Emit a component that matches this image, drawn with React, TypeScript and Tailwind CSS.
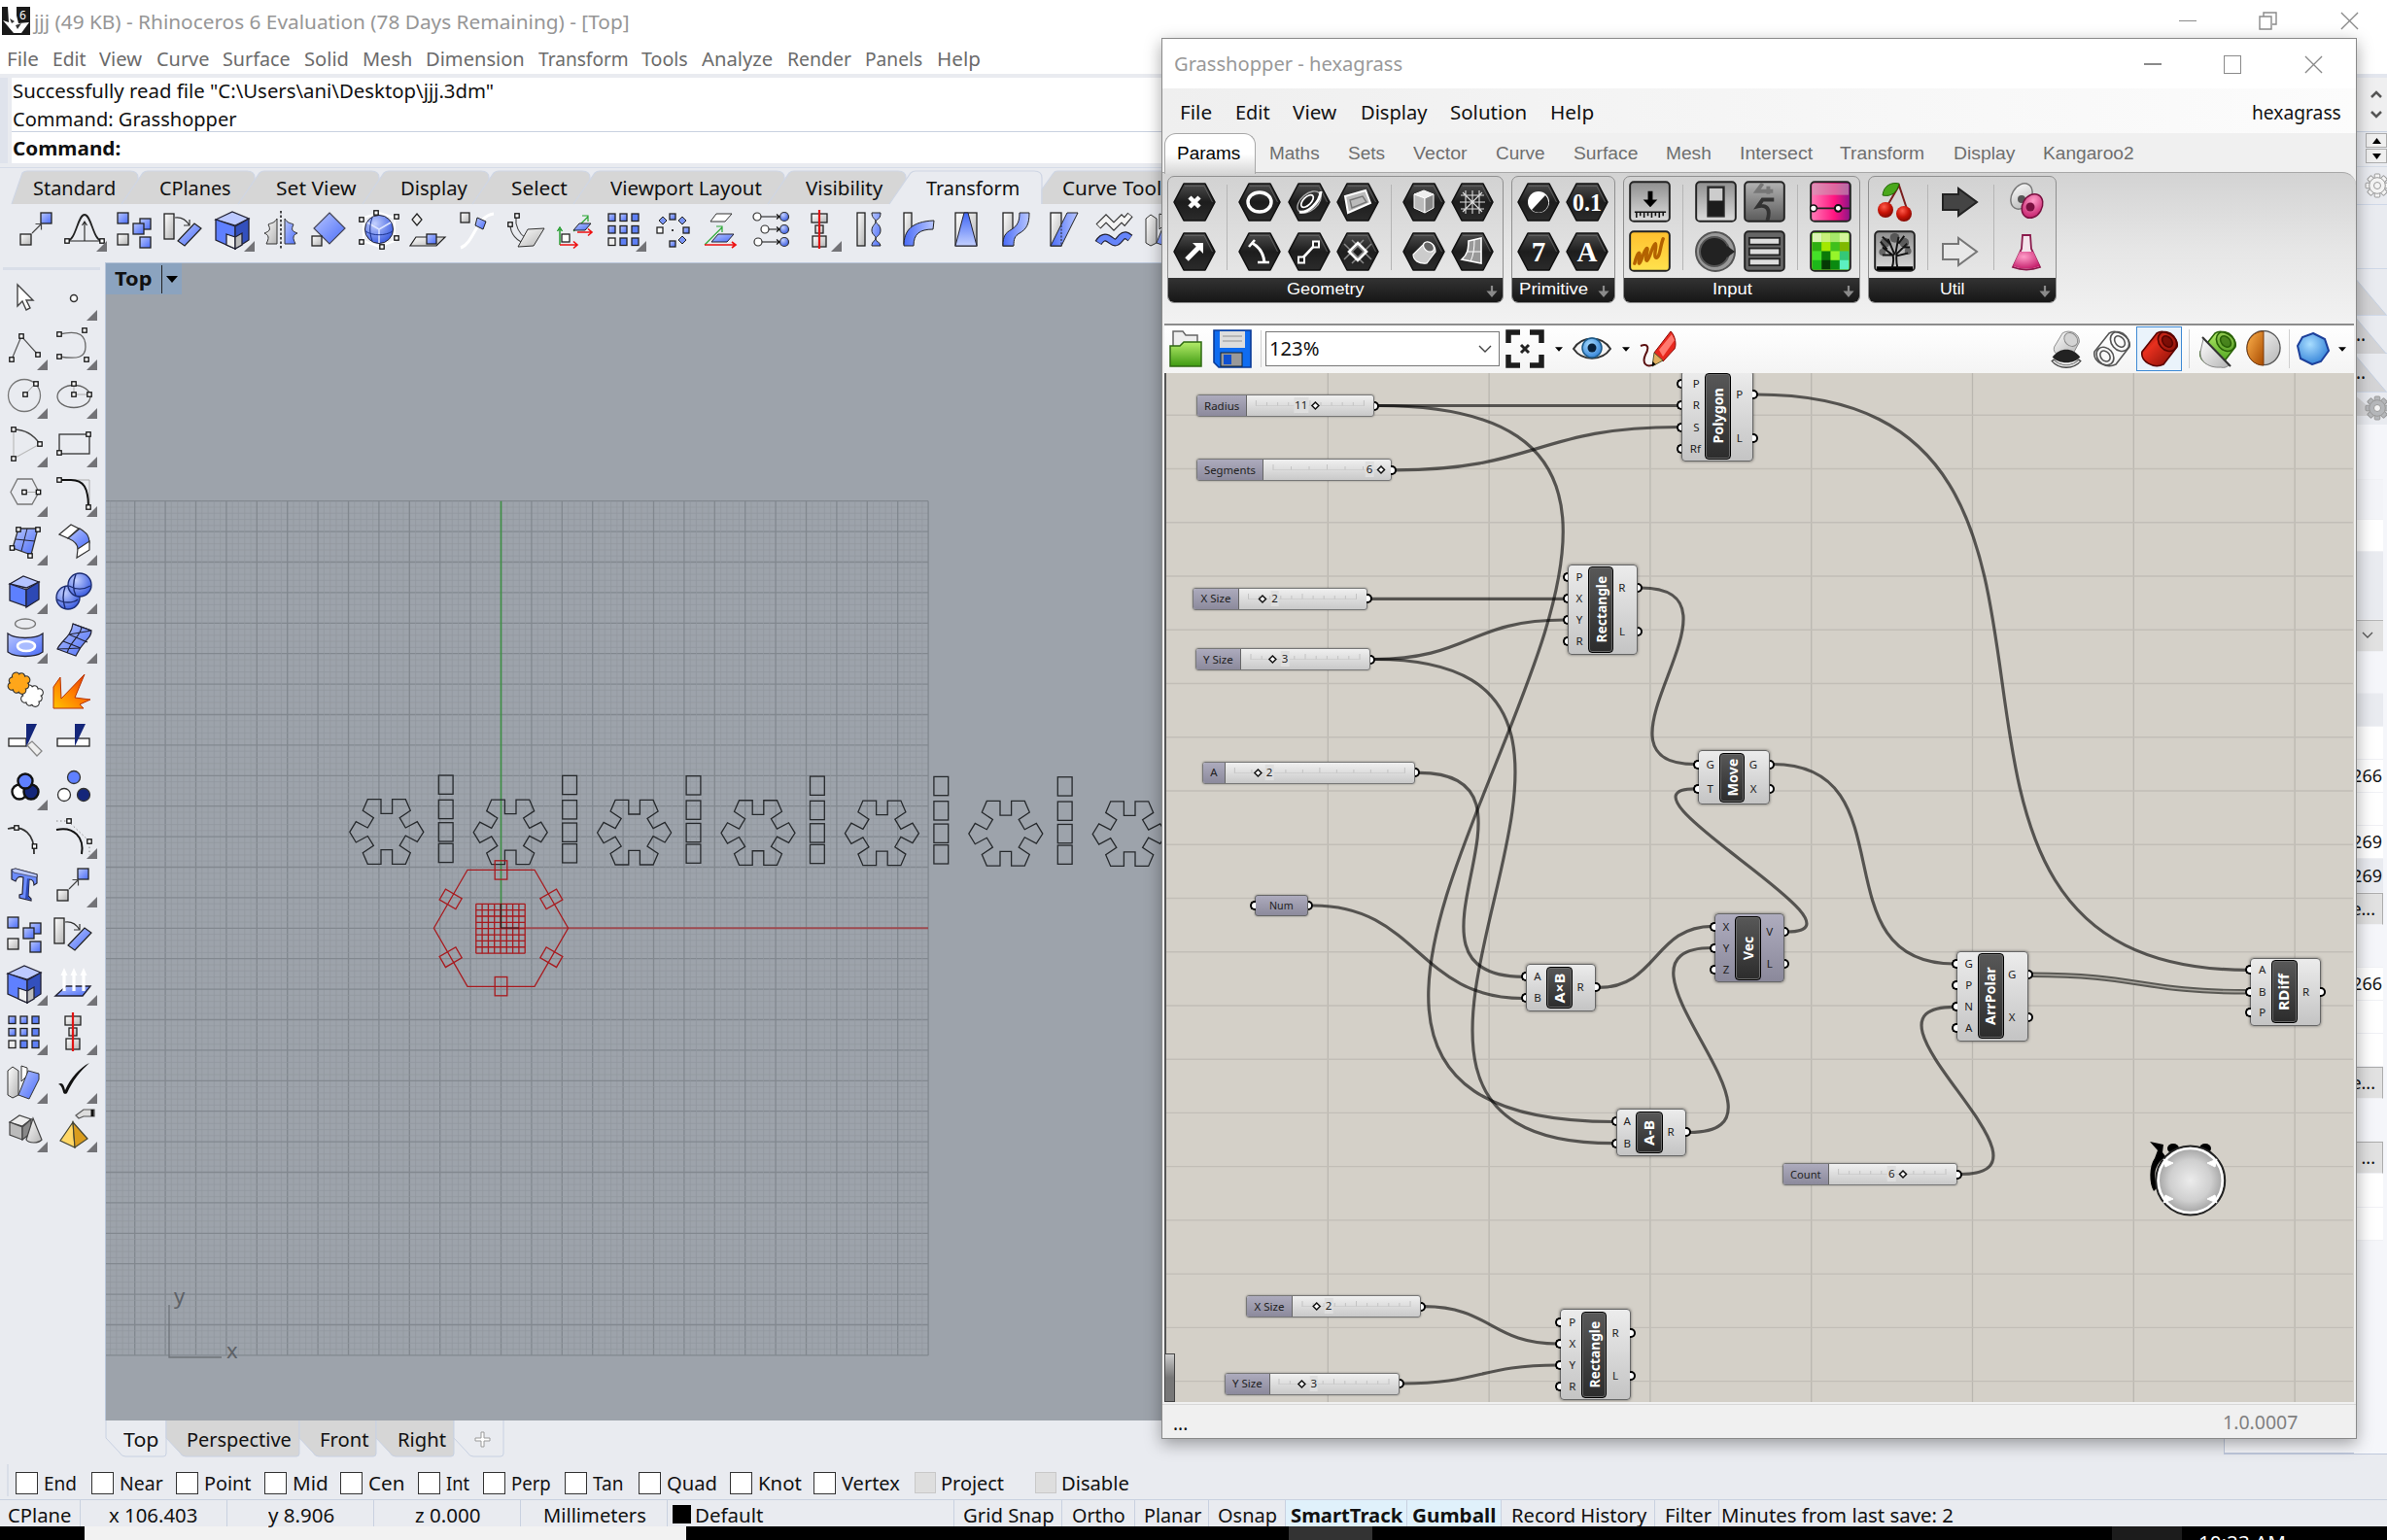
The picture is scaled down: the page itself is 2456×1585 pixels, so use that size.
import React, { useLayoutEffect, useRef, useState } from 'react';

/* ---------- text fitted to a given width ---------- */
function Label({ text, w, className = '' }: { text: string; w: number; className?: string }) {
  const ref = useRef<HTMLSpanElement>(null);
  const [k, setK] = useState(1);
  useLayoutEffect(() => {
    if (ref.current && ref.current.offsetWidth) setK(w / ref.current.offsetWidth);
  }, [text, w]);
  return (
    <span className={'inline-block shrink-0 whitespace-nowrap ' + className} style={{ width: w }}>
      <span ref={ref} className="inline-block origin-left" style={{ transform: `scaleX(${k})` }}>
        {text}
      </span>
    </span>
  );
}

/* ---------- drawing helpers ---------- */
const Defs = () => (
  <svg className="absolute h-0 w-0">
    <defs>
      <linearGradient id="bl" x1="0" y1="0" x2="1" y2="1"><stop offset="0" stopColor="#b9c7ff" /><stop offset="1" stopColor="#4a6cf7" /></linearGradient>
      <linearGradient id="bl2" x1="0" y1="0" x2="0" y2="1"><stop offset="0" stopColor="#3f66f5" /><stop offset="1" stopColor="#c3d0ff" /></linearGradient>
      <linearGradient id="bl3" x1="0" y1="0" x2="1" y2="0"><stop offset="0" stopColor="#4a6cf7" /><stop offset="1" stopColor="#b9c7ff" /></linearGradient>
      <radialGradient id="ball" cx=".35" cy=".3" r=".8"><stop offset="0" stopColor="#c3d0ff" /><stop offset="1" stopColor="#2f52dd" /></radialGradient>
      <linearGradient id="gy" x1="0" y1="0" x2="1" y2="1"><stop offset="0" stopColor="#ffffff" /><stop offset="1" stopColor="#b4b4b4" /></linearGradient>
      <linearGradient id="fire" x1="0" y1="1" x2="1" y2="0"><stop offset="0" stopColor="#ffc400" /><stop offset=".5" stopColor="#ff7a00" /><stop offset="1" stopColor="#e03000" /></linearGradient>
      <linearGradient id="hx" x1="0" y1="0" x2="0" y2="1"><stop offset="0" stopColor="#4c4c4c" /><stop offset=".5" stopColor="#1d1d1d" /><stop offset="1" stopColor="#2b2b2b" /></linearGradient>
      <linearGradient id="btn" x1="0" y1="0" x2="0" y2="1"><stop offset="0" stopColor="#8f8f8f" /><stop offset="1" stopColor="#dcdcdc" /></linearGradient>
      <linearGradient id="btnd" x1="0" y1="0" x2="0" y2="1"><stop offset="0" stopColor="#b4b4b4" /><stop offset="1" stopColor="#5a5a5a" /></linearGradient>
      <linearGradient id="yel" x1="0" y1="0" x2="0" y2="1"><stop offset="0" stopColor="#ffc02e" /><stop offset="1" stopColor="#ffe24d" /></linearGradient>
      <linearGradient id="pink" x1="0" y1="0" x2="1" y2="0"><stop offset="0" stopColor="#ff7db8" /><stop offset=".6" stopColor="#ff1480" /><stop offset="1" stopColor="#8a1488" /></linearGradient>
      <radialGradient id="red" cx=".4" cy=".3" r=".8"><stop offset="0" stopColor="#ff5a4a" /><stop offset=".5" stopColor="#c81408" /><stop offset="1" stopColor="#6e0500" /></radialGradient>
      <linearGradient id="redcan" x1="0" y1="0" x2="1" y2="1"><stop offset="0" stopColor="#7c0a04" /><stop offset=".35" stopColor="#e8301e" /><stop offset="1" stopColor="#7c0a04" /></linearGradient>
      <linearGradient id="grn" x1="0" y1="0" x2="0" y2="1"><stop offset="0" stopColor="#b4ec6a" /><stop offset="1" stopColor="#3f9a12" /></linearGradient>
      <radialGradient id="sky" cx=".4" cy=".35" r=".7"><stop offset="0" stopColor="#a8ddff" /><stop offset="1" stopColor="#2f7fd6" /></radialGradient>
      <linearGradient id="orange" x1="0" y1="0" x2="1" y2="1"><stop offset="0" stopColor="#ffb34d" /><stop offset="1" stopColor="#a84a00" /></linearGradient>
      <radialGradient id="mag" cx=".4" cy=".3" r=".8"><stop offset="0" stopColor="#ff9cc8" /><stop offset="1" stopColor="#c01464" /></radialGradient>
      <radialGradient id="disc" cx=".5" cy=".5" r=".5"><stop offset="0" stopColor="#ececec" /><stop offset=".6" stopColor="#cfcfcf" /><stop offset="1" stopColor="#9c9c9c" /></radialGradient>
    </defs>
  </svg>
);

const Sq = ({ x, y, w = 11, h = 11, f = 'url(#bl)' }: { x: number; y: number; w?: number; h?: number; f?: string }) => (
  <rect x={x} y={y} width={w} height={h} fill={f} stroke="#222" strokeWidth="1.3" />
);
const Pt = ({ x, y }: { x: number; y: number }) => <rect x={x - 2.2} y={y - 2.2} width="4.4" height="4.4" fill="#fff" stroke="#111" strokeWidth="1.3" />;
const W = 'url(#gy)';

/* jigsaw piece: a turned square with four knobs, outlined as one shape */
function Piece({ x, y, f }: { x: number; y: number; f: string }) {
  const body = (
    <>
      <rect x="-6" y="-6" width="12" height="12" />
      <circle cx="0" cy="-7.500" r="3.400" /><circle cx="8" cy="0" r="3.400" /><circle cx="0" cy="8" r="3.400" /><circle cx="-8" cy="0" r="3.400" />
      <circle cx="-5" cy="-5" r="3" /><circle cx="5" cy="5" r="3" /><circle cx="5" cy="-5" r="3" /><circle cx="-5" cy="5" r="3" />
    </>
  );
  return (
    <g transform={`translate(${x},${y}) rotate(-24)`}>
      <g fill="#333" stroke="#333" strokeWidth="2.400">{body}</g>
      <g fill={f}>{body}</g>
      <g fill="#eceef2" stroke="#333" strokeWidth="0" />
    </g>
  );
}

const I: Record<string, React.ReactNode> = {
  move: (<g><Sq x={9} y={29} f={W} /><Sq x={30} y={7} /><path d="M21 28l9-9M24.500 18.500h6v6" fill="none" stroke="#444" strokeWidth="1.2" /></g>),
  soft: (<g fill="none" stroke="#222"><path d="M7 36c9 0 11-27 18-27s9 27 18 27" strokeWidth="1.8" /><path d="M7 36h36M25 36V17M22.500 20l2.500-4 2.500 4" strokeWidth="1.100" /><Pt x={7} y={36} /><Pt x={43} y={36} /></g>),
  copy: (<g><Sq x={8} y={7} /><Sq x={31} y={13} /><Sq x={24} y={18} /><Sq x={8} y={29} f={W} /><Sq x={31} y={32} /></g>),
  rotate: (<g><Sq x={6} y={8} w={10} h={26} f={W} /><path d="M17 12c7-1 12 3 15 8M32 14v6h-6" fill="none" stroke="#333" strokeWidth="1.200" /><path d="M20 36l17-18 7 5-17 18z" fill="url(#bl)" stroke="#222" strokeWidth="1.200" /></g>),
  cube: (<g stroke="#223" strokeWidth="1.300"><path d="M8 14l17-8 17 7-14 7z" fill="#bcc9ff" /><path d="M8 14l20 7v23l-20-9z" fill="#5f80ff" /><path d="M28 21l14-8v22l-14 9z" fill="#3350bd" /><path d="M19 29l9 3v12l-9-4z" fill="#eee" /><path d="M28 32l7-4v12l-7 4z" fill="#bbb" /></g>),
  mirror: (<g stroke="#333"><path d="M21 13c-3 5-5 4-9 6 3 6 1 7-4 9 5 2 5 5 2 11h11z" fill={W} /><path d="M29 13c3 5 5 4 9 6-3 6-1 7 4 9-5 2-5 5-2 11H29z" fill="url(#bl)" /><path d="M25 5v40" stroke="#111" strokeWidth="1.500" strokeDasharray="2.500 2" /></g>),
  scale: (<g><path d="M25 7l16 16-16 16L9 23z" fill="url(#bl)" stroke="#445" strokeWidth="1.200" /><Sq x={7} y={31} w={10} h={10} f={W} /></g>),
  cage: (<g><path d="M25 7l16 5v24l-16 6-16-6V12z" fill="none" stroke="#fff" strokeWidth="2" /><circle cx="25" cy="24" r="14.500" fill="url(#ball)" stroke="#223" /><path d="M25 24v14M25 24l-12-7M25 24l12-7" stroke="#dde5ff" fill="none" strokeWidth="1.500" /><path d="M18 12c-3 8-3 16 0 24M11 26c8 5 20 5 28 0" stroke="#1d3590" fill="none" /><Pt x={22} y={7} /><Pt x={7} y={14} /><Pt x={43} y={11} /><Pt x={7} y={37} /><Pt x={43} y={33} /><Pt x={28} y={42} /></g>),
  proj: (<g stroke="#222" strokeWidth="1.200"><path d="M14 8l5 6-5 6-5-6z" fill="#eee" /><path d="M13 32h30l-9 9H7z" fill={W} /><Sq x={24} y={29} w={10} h={10} /></g>),
  orient: (<g><path d="M42 8C24 10 22 38 8 43" stroke="#fff" strokeWidth="3" fill="none" /><Sq x={8} y={7} w={9} h={10} f={W} /><path d="M25 12l9 4-3 8-8-4z" fill="url(#bl)" stroke="#222" /></g>),
  orient2: (<g fill="none" stroke="#444"><path d="M15 12v6c2 9 8 15 15 17M9 19c0 9 6 18 18 20" strokeWidth="1.100" /><path d="M27 24l17-1-11 18-16 1z" fill={W} stroke="#333" /><Pt x={16} y={10} /><Pt x={9} y={19} /></g>),
  remap: (<g fill="none"><path d="M10 40V24M7.500 26l2.500-4 2.500 4" stroke="#1b9a25" strokeWidth="1.400" /><path d="M10 40h17M24 36.500l4 3.500-4 3.500" stroke="#e11" strokeWidth="1.600" /><Sq x={12} y={29} w={8} h={8} f="#fff" /><path d="M24 26l15-15M33 10h6v6" stroke="#27a32f" strokeWidth="1.200" /><path d="M30 18h12l-6 7H24z" fill="url(#bl)" stroke="#222" /><path d="M28 27h14M39 23.500l4 3.500-4 3.500" stroke="#e11" strokeWidth="1.600" /></g>),
  array: (<g>{[0, 1, 2].map((r) => [0, 1, 2].map((c) => <Sq key={r + '-' + c} x={9 + c * 12} y={8 + r * 12.5} w={7} h={7.5} f={r === 2 && c === 0 ? '#eee' : r === 2 || c === 2 ? '#5f80f5' : 'url(#bl)'} />))}</g>),
  polar: (<g><Sq x={22} y={8} w={6} h={6} /><Sq x={9} y={22} w={6} h={6} f="#fff" /><Sq x={36} y={22} w={6} h={6} /><Sq x={22} y={36} w={6} h={6} /><path d="M15 11l4 4-4 4-4-4zM35 11l4 4-4 4-4-4zM35 31l4 4-4 4-4-4z" fill="#7a94f5" stroke="#222" /><circle cx="25" cy="25" r="1" /></g>),
  orient3: (<g fill="none"><path d="M20 8h16l-7 8H14z" fill="#fff" stroke="#333" /><path d="M8 40l18-18M20 21h6v6" stroke="#2aa835" strokeWidth="1.200" /><path d="M22 29h16l-7 8H15z" fill="url(#bl)" stroke="#223" /><path d="M8 40h31M36 37l4 3-4 3" stroke="#e11" strokeWidth="1.600" /></g>),
  setpt: (<g stroke="#333" strokeWidth="1.200">{[[11, 11], [19, 24], [12, 37]].map(([x, y]) => (<g key={y}><path d={`M${x} ${y}H34M31 ${y - 2.5}l3 2.500-3 2.500`} fill="none" stroke="#111" /><circle cx={x} cy={y} r="4" fill="#fff" /><circle cx="39" cy={y} r="4.500" fill="url(#ball)" /></g>))}</g>),
  align: (<g><Sq x={17} y={8} w={16} h={9} f={W} /><Sq x={21} y={20} w={8} h={8} f={W} /><Sq x={18} y={31} w={14} h={11} f={W} /><path d="M25 4v40" stroke="#e11414" strokeWidth="2.200" /></g>),
  twist: (<g stroke="#222"><Sq x={13} y={7} w={8} h={34} f={W} /><path d="M28 7h9c0 8-5 6-5 9 0 2 5 3 5 9s-5 6-5 9 5 3 5 7h-9c0-5 4-5 4-8s-4-3-4-8 4-6 4-9-4-3-4-9z" fill="url(#bl)" /></g>),
  bend: (<g stroke="#222"><Sq x={11} y={7} w={8} h={32} f={W} /><path d="M11 41c0-16 8-25 31-26l-1 9c-14 0-20 5-20 17z" fill="url(#bl3)" /></g>),
  taper: (<g><Sq x={14} y={7} w={22} h={34} f={W} /><path d="M23 7h4l9 34H14z" fill="url(#bl2)" stroke="#223" /></g>),
  flow: (<g stroke="#222"><Sq x={12} y={7} w={10} h={34} f={W} /><path d="M12 41c0-10 2-13 9-17 6-4 8-8 8-17h10c0 12-3 17-10 21-5 3-6 6-6 13z" fill="url(#bl3)" /></g>),
  shear: (<g stroke="#222"><Sq x={11} y={7} w={11} h={34} f={W} /><path d="M11 41L28 7h11L22 41z" fill="url(#bl3)" /><path d="M22 20v21" strokeDasharray="2 1.500" /></g>),
  smooth: (<g fill="none" strokeLinejoin="miter"><path d="M9 21l8-8 8 8 8-8 3 3 6-7" stroke="#333" strokeWidth="7" /><path d="M9.500 20.500l7.500-7.500 8 8 8-8 3 3 5.500-6.500" stroke="#f4f4f4" strokeWidth="4.600" /><path d="M9 38c5-8 9-6 14-2s7-1 10-4 5-2 9 1" stroke="#223" strokeWidth="8" /><path d="M9.500 37.500c5-7.500 8.500-5.500 13.500-1.500s7-1 10-4 5-2 8.500 1" stroke="#6685fa" strokeWidth="5.600" /></g>),
  cagefold: (<g stroke="#333"><path d="M8 13l5-4 6 4v25l-6 3-5-3z" fill={W} /><path d="M22 8l6 2v8l-6 6z" fill="#fff" /><path d="M19 38l10-25 11 3v6L30 42z" fill="url(#bl)" /></g>),

  arrow: (<path d="M18 10v22l5-5 4 9 4-2-4-8h7z" fill="#fff" stroke="#444" strokeWidth="1.400" transform="translate(0,1)" />),
  point: (<circle cx="26" cy="25" r="3.500" fill="#fff" stroke="#333" strokeWidth="1.500" />),
  pline: (<g><path d="M12 38l10-24 17 19" fill="none" stroke="#555" strokeWidth="1.200" /><Pt x={12} y={38} /><Pt x={22} y={14} /><Pt x={39} y={33} /></g>),
  curve: (<g><path d="M11 12c22-5 27 2 27 13s-8 13-27 10" fill="none" stroke="#666" strokeWidth="1.300" /><Pt x={11} y={12} /><Pt x={37} y={8} /><Pt x={11} y={35} /><Pt x={39} y={38} /></g>),
  circle: (<g><circle cx="25" cy="24" r="16.500" fill="none" stroke="#777" strokeWidth="1.300" /><path d="M26 23l10-11" stroke="#999" /><Pt x={26} y={23} /><Pt x={37} y={12} /></g>),
  ellipse: (<g><ellipse cx="26" cy="25" rx="17" ry="11.500" fill="none" stroke="#666" strokeWidth="1.300" /><path d="M26 13v10h17" fill="none" stroke="#aaa" /><Pt x={26} y={12} /><Pt x={26} y={23} /><Pt x={42} y={23} /></g>),
  arc: (<g><path d="M14 9v30l27-15" fill="none" stroke="#bbb" strokeWidth="1.200" /><path d="M14 9c12 0 21 6 27 15" fill="none" stroke="#444" strokeWidth="1.300" /><Pt x={14} y={9} /><Pt x={41} y={24} /><Pt x={14} y={39} /></g>),
  rect: (<g><rect x="11" y="14" width="31" height="20" fill="none" stroke="#333" strokeWidth="1.300" /><Pt x={11} y={33} /><Pt x={41} y={14} /></g>),
  hex: (<g><path d="M18 10h15l7 13.500-7 12.500H18l-7-12.500z" fill="none" stroke="#777" strokeWidth="1.300" /><path d="M25 23.500h14" stroke="#aaa" /><Pt x={25} y={23.5} /><Pt x={39.5} y={23.5} /></g>),
  fillet: (<g><path d="M11 11h31v28" fill="none" stroke="#aaa" /><path d="M11 11h12c13 0 18 8 18 28" fill="none" stroke="#111" strokeWidth="2" /><Pt x={11} y={11} /><Pt x={41} y={39} /></g>),
  surf: (<g><path d="M19 10h20l-7 27-19-7z" fill="url(#bl)" stroke="#333" strokeWidth="1.300" /><path d="M28 10l-6 23M16 21l20 2" stroke="#223" fill="none" /><Pt x={19} y={11} /><Pt x={39} y={11} /><Pt x={12.5} y={30} /><Pt x={31} y={38} /></g>),
  filsurf: (<g stroke="#333" strokeWidth="1.200"><path d="M11 16l12-10 8 4-11 10z" fill="#fff" /><path d="M20 20l12-10c8 5 10 8 10 15l-12 6c0-5-3-8-10-11z" fill="url(#bl)" /><path d="M30 31l12-8v9l-13 8z" fill="#fff" /></g>),
  box: (<g stroke="#223" strokeWidth="1.300"><path d="M10 17l14-8 16 6-13 6z" fill="#b4c4ff" /><path d="M10 17l17 6v17l-17-6z" fill="#5d80ff" /><path d="M27 23l13-8v18l-13 8z" fill="#2d49b5" /></g>),
  union: (<g stroke="#1c2c70" strokeWidth="1.400"><circle cx="20" cy="31" r="12" fill="url(#ball)" /><circle cx="32" cy="18" r="12" fill="url(#ball)" /><path d="M17 20c-3 8-2 16 0 22M9 33c6 4 16 4 21 0M28 7c-3 8-3 16 0 22M21 19c7 4 15 4 22 0" fill="none" /></g>),
  projc: (<g><ellipse cx="26" cy="8" rx="10.500" ry="5" fill="none" stroke="#777" strokeWidth="1.300" /><path d="M8 18c8 6 28 6 36 0v19c-8 6-28 6-36 0z" fill="url(#bl)" stroke="#223" strokeWidth="1.300" /><ellipse cx="27" cy="31" rx="9" ry="5" fill="#a9bcff" stroke="#fff" strokeWidth="2.500" /></g>),
  mesh: (<g stroke="#223" strokeWidth="1.200" fill="url(#bl)"><path d="M25 8l19 7c0 9-8 9-16 26L9 34c4-9 14-12 16-26z" /><path d="M34 11c-1 10-11 14-15 27M21 19l19 8M15 26l18 7M25 8l19 7M9 34l24-1M21 19l23-4" fill="none" /></g>),
  puzzle: (<g><Piece x={33} y={31} f="#fff" /><Piece x={19.5} y={18} f="#ffa61a" /></g>),
  explode: (<path d="M5 44V22l7-10 1 22L37 9 27 33l16 2-11 5 4 4z" fill="url(#fire)" stroke="#b83200" strokeWidth="1" />),
  trim: (<g><Sq x={9} y={25} w={18} h={8} f="#fff" /><path d="M27 34V10h11z" fill="#14267a" /><path d="M28 32l5-4 10 10-5 5z" fill="#eee" stroke="#888" strokeWidth="1.300" /></g>),
  split: (<g><Sq x={9} y={25} w={33} h={8} f="#fff" /><path d="M27 33V10h11z" fill="#14267a" /></g>),
  group: (<g strokeWidth="2.400" stroke="#111"><circle cx="20" cy="30" r="7.500" fill="#fff" /><circle cx="32" cy="30" r="7.500" fill="#14267a" /><circle cx="26" cy="19" r="7.500" fill="#5f80ff" /></g>),
  ungroup: (<g strokeWidth="1.300" stroke="#333"><circle cx="16" cy="33" r="6.500" fill="#fff" /><circle cx="36" cy="33" r="6.500" fill="#14267a" /><circle cx="26" cy="15" r="6.500" fill="#5f80ff" /></g>),
  ptson: (<g><path d="M8 17c16-4 28 5 27 26" fill="none" stroke="#333" strokeWidth="1.800" /><Pt x={17} y={16} /><Pt x={35.5} y={35} /></g>),
  ptson2: (<g><path d="M8 18c18-4 29 8 26 25" fill="none" stroke="#111" strokeWidth="2" /><path d="M8 9h12l22 21v14" fill="none" stroke="#888" strokeDasharray="1.500 2.500" /><Pt x={21} y={9} /><Pt x={42} y={30} /></g>),
  text: (<g stroke="#223" strokeWidth="1.200"><path d="M12 9l4-1 22 6v9l-3 2c0-4-2-6-5-6l-1 17 3 3v2l-12-3v-3l3-1 1-17c-5-2-7 1-8 4l-4-2z" fill="#6c8cff" /><path d="M12 9l4-1 22 6v3l-24-5z" fill="#bccaff" strokeWidth=".6" /><path d="M28 18l2 1-1 18 3 3-6-1z" fill="#2d49b5" stroke="none" /></g>),
  extrude: (<g><path d="M18 28h25l-8 10H7z" fill="url(#bl)" stroke="#223" strokeWidth="1.400" /><path d="M16 33V14M26 33V14M36 33V14" stroke="#fff" strokeWidth="3.200" /><path d="M12.500 17L16 9l3.500 8zM22.500 17L26 9l3.500 8zM32.500 17L36 9l3.500 8z" fill="#fff" /></g>),
  check: (<path d="M10 28c4-3 6 1 7 6 6-13 15-23 25-28-10 9-17 18-23 31-2 2-4 0-4-1-1-5-3-8-5-8z" fill="#111" />),
  solids: (<g stroke="#444" strokeWidth="1.200"><path d="M10 17l10-7 12 4-9 7z" fill="#eee" /><path d="M10 17l13 5v13l-13-5z" fill="#bbb" /><path d="M23 22l9-8v14l-9 7z" fill="#888" /><path d="M34 13l9 22c-4 4-13 4-16 0z" fill={W} /></g>),
  pyramid: (<g stroke="#443" strokeWidth="1.200"><path d="M25 17L12 36l15 7z" fill="#ffd766" /><path d="M25 17l15 17-13 9z" fill="#d99c1e" /><path d="M28 10l8-6h11v7H36l-5 2z" fill="#ddd" stroke="#555" /><path d="M45 4v7" stroke="#111" strokeWidth="3" /></g>),
};

function Icon({ n }: { n: string }) {
  return <svg viewBox="0 0 50 50" className="block h-[50px] w-[50px]">{I[n]}</svg>;
}
const Corner = ({ className }: { className: string }) => (
  <svg viewBox="0 0 11 11" className={'absolute h-[11px] w-[11px] ' + className}><path d="M11 0v11H0z" fill="#737377" /></svg>
);

/* ---------- Rhino top ---------- */
const menus: [string, number][] = [['File', 33], ['Edit', 35], ['View', 45], ['Curve', 55], ['Surface', 70], ['Solid', 46], ['Mesh', 52], ['Dimension', 102], ['Transform', 93], ['Tools', 48], ['Analyze', 74], ['Render', 67], ['Panels', 60], ['Help', 45]];
const tabs: [string, number, number, number][] = [['Standard', 130, 22, 85], ['CPlanes', 120, 22, 74], ['Set View', 128, 22, 83], ['Display', 113, 22, 69], ['Select', 104, 23, 58], ['Viewport Layout', 200, 21, 156], ['Visibility', 125, 22, 79], ['Transform', 140, 21, 96], ['Curve Tools', 140, 21, 112]];
const tools = ['move', 'soft', 'copy', 'rotate', 'cube', 'mirror', 'scale', 'cage', 'proj', 'orient', 'orient2', 'remap', 'array', 'polar', 'orient3', 'setpt', 'align', 'twist', 'bend', 'taper', 'flow', 'shear', 'smooth', 'cagefold'];
const toolCorner = [1, 4, 12, 16];
const side: [string, boolean][] = [
  ['arrow', false], ['point', true], ['pline', true], ['curve', true], ['circle', true], ['ellipse', true], ['arc', true], ['rect', true], ['hex', true], ['fillet', true],
  ['surf', true], ['filsurf', true], ['box', true], ['union', true], ['projc', true], ['mesh', true], ['puzzle', false], ['explode', false], ['trim', false], ['split', false],
  ['group', true], ['ungroup', false], ['ptson', false], ['ptson2', true], ['text', false], ['move', true], ['copy', false], ['rotate', false], ['cube', true], ['extrude', true],
  ['array', true], ['align', true], ['cagefold', true], ['check', true], ['solids', true], ['pyramid', true],
];
const shifted = ['move', 'copy', 'rotate', 'cube', 'array', 'align', 'cagefold'];

const WinX = () => <svg viewBox="0 0 20 20" className="h-[19px] w-[19px]"><path d="M1 1l18 18M19 1L1 19" stroke="#8a8a8a" strokeWidth="1.400" /></svg>;

function RhinoHeader() {
  return (
    <>
      <div className="flex h-[42px] shrink-0 items-center bg-white pl-[2px] pt-[1px]">
        <svg viewBox="0 0 29 29" className="h-[29px] w-[29px]">
          <rect width="29" height="29" fill="#1a1a1a" />
          <path d="M6 0l9 0 0 9 2 8 11-1-8 11h-8L1 14l6 2z" fill="#fff" /><path d="M8 12l5 3-3 2zM14 19l6-2-4 6z" fill="#333" />
          <text x="18" y="13" fontSize="12" fill="#fff" fontFamily="Noto Sans, sans-serif">6</text>
        </svg>
        <Label text="jjj (49 KB) - Rhinoceros 6 Evaluation (78 Days Remaining) - [Top]" w={612} className="ml-[4px] mt-[2px] text-[#969696]" />
        <div className="ml-auto flex items-center pr-[29px]">
          <div className="mr-[64px] h-[1.500px] w-[18px] bg-[#8a8a8a]" />
          <svg viewBox="0 0 19 19" className="mr-[65px] h-[19px] w-[19px]"><path d="M1 5h12v13H1zM5 5V1h13v12h-4" fill="none" stroke="#8a8a8a" strokeWidth="1.400" /></svg>
          <WinX />
        </div>
      </div>
      <div className="flex h-[34px] shrink-0 items-center gap-[14.100px] bg-white pl-[7px] pt-[4px] text-[#6b6b6b]">
        {menus.map(([t, w]) => <Label key={t} text={t} w={w - 0.5} />)}
      </div>
      <div className="flex h-[96px] shrink-0 border-y-[4px] border-[#e9ebf0]">
        <div className="h-full w-[12px] border-r-4 border-[#e9ebf0] bg-[#dfe3ec]" />
        <div className="flex flex-1 flex-col bg-white">
          <div className="flex h-[56px] flex-col border-b border-[#c9d1e0] pl-[1px]">
            <div className="flex h-[28px] items-center"><Label text={'Successfully read file "C:\\Users\\ani\\Desktop\\jjj.3dm"'} w={495} /></div>
            <div className="flex h-[28px] items-center pt-[1px]"><Label text="Command: Grasshopper" w={230} /></div>
          </div>
          <div className="flex flex-1 items-center pl-[1px] pt-[1px]"><Label text="Command:" w={111} className="font-bold" /></div>
        </div>
      </div>
      <div className="flex h-[38px] shrink-0 items-end border-t border-[#d5dce8] pl-[12px]">
        {tabs.map(([t, w, pl, tw], i) => {
          const active = t === 'Transform';
          const d = i === 0 ? `M0 35L11 3Q13 1 16 1H${w - 8}Q${w} 1 ${w} 8V35` : i === 8 ? `M0 35V20L12 3Q13 1 16 1H${w}V35` : `M-17 35L5 3Q7 1 10 1H${w - 8}Q${w} 1 ${w} 8V35`;
          return (
            <div key={t} className="relative flex h-[35px] shrink-0 items-center pt-[3px]" style={{ width: w, paddingLeft: pl }}>
              <svg className="absolute inset-0 h-full w-full overflow-visible"><path d={d} fill={active ? '#e9ebf0' : '#d6d6d6'} stroke="#cfd6e4" strokeWidth="1.200" /></svg>
              <Label text={t} w={tw} className="relative" />
            </div>
          );
        })}
      </div>
      <div className="flex h-[60px] shrink-0 pl-[12px]">
        {tools.map((n, i) => (
          <div key={n} className="relative w-[50.400px] shrink-0 pt-[2px]">
            <Icon n={n} />
            {toolCorner.includes(i) && <Corner className="left-[37px] top-[38px]" />}
          </div>
        ))}
      </div>
    </>
  );
}

function SideBar() {
  return (
    <div className="h-[1192px] w-[109px] shrink-0 border-r border-[#b9c6da] pt-[5px]">
      <div className="mb-[4px] ml-[3px] h-[3px] w-[100px] bg-[#d9dee8]" />
      <div className="grid w-[101px] grid-cols-[50.400px_50.400px]">
        {side.map(([n, c], i) => (
          <div key={i} className="relative h-[50.350px]">
            <div className={shifted.includes(n) ? 'translate-y-[1px]' : ''}><Icon n={n} /></div>
            {c && <Corner className="bottom-[2px] right-[1px]" />}
          </div>
        ))}
      </div>
    </div>
  );
}

/* ---------- Rhino viewport ---------- */
const half: [number, number][] = [[-19.5, -33.3], [-5.8, -33.3], [-5.8, -18.7], [5.8, -18.7], [5.8, -33.3], [19.5, -33.3], [24.5, -21.7], [13.4, -14.3], [19.5, -4], [31.5, -10.3], [38, 0.3]];
const gearPts = [...half, ...[...half].slice(0, 10).reverse().map(([x, y]) => [x, -y] as [number, number]), [-24.5, 21.7], [-13.4, 14.3], [-19.5, 4.5], [-31.5, 11], [-38, 0.3], [-31.5, -10.3], [-19.5, -4], [-13.4, -14.3], [-24.5, -21.7]]
  .map((p) => p.join(',')).join(' ');

function Viewport() {
  const ox = 515.5, oy = 955.3, m = 6.28;
  const lines: React.ReactNode[] = [];
  for (let k = -70; k <= 70; k++) {
    const major = k % 5 === 0;
    const c = major ? '#82888f' : '#92989f';
    const sw = major ? 1.3 : 0.7;
    lines.push(<path key={'h' + k} d={`M109 ${oy + k * m}H${ox + 70 * m}`} stroke={c} strokeWidth={sw} />);
    if (ox + k * m > 109) lines.push(<path key={'v' + k} d={`M${ox + k * m} ${oy - 70 * m}V${oy + 70 * m}`} stroke={c} strokeWidth={sw} />);
  }
  return (
    <div className="relative h-[1192px] w-[1087px] shrink-0 overflow-hidden border-t border-[#b9c6da] bg-[#9da3ab]">
      <svg viewBox="109 271 1087 1191" className="block h-[1191px] w-[1087px]" fill="none">
        {lines}
        <path d={`M${ox} ${oy}V${oy - 439.5}`} stroke="#3f8f45" strokeWidth="1.600" />
        <path d={`M${ox} ${oy}H955`} stroke="#9e4a50" strokeWidth="2" />
        <g stroke="#26292c" strokeWidth="1.300">
          {[0, 1, 2, 3, 4, 5, 6].map((i) => <polygon key={i} points={gearPts} transform={`translate(${397.8 + i * 127.4},${856 + i * 0.35})`} />)}
          {[0, 1, 2, 3, 4, 5].map((i) => [798, 823.3, 846.7, 868.3].map((y) => <rect key={i + '-' + y} x={451.3 + i * 127.4} y={y + i * 0.35} width="14.800" height="19.300" />))}
        </g>
        <g stroke="#a81a1e" strokeWidth="1.300">
          <polygon points="446.4,955.3 481,895.3 550,895.3 584.6,955.3 550,1015.3 481,1015.3" />
          {[0, 60, 120, 180, 240, 300].map((a) => <rect key={a} x="509.200" y="885.800" width="12.600" height="19.300" transform={`rotate(${a} ${ox} ${oy})`} />)}
          {[0, 1, 2, 3, 4, 5, 6, 7, 8].map((i) => <path key={i} d={`M${489.8 + i * 6.3} 930.300v51M489.800 ${930.3 + i * 6.35}h50.400`} />)}
        </g>
        <path d={`M${ox} 930V955H534`} stroke="#2b1a1a" strokeWidth="1.200" />
        <path d="M174 1343v54h54" stroke="#6f747a" strokeWidth="1.300" />
        <g fill="#5d6166" fontSize="22" fontFamily="Noto Sans, sans-serif"><text x="179" y="1342">y</text><text x="233" y="1398">x</text></g>
      </svg>
      <div className="absolute left-0 top-0 flex h-[32px] w-[78px] items-center bg-[#8ba3bf] pl-[9px]">
        <Label text="Top" w={39} className="font-bold" />
        <div className="ml-[9px] h-[29px] w-px bg-[#222]" />
        <svg viewBox="0 0 12 7" className="ml-[4px] h-[7px] w-[12px]"><path d="M0 0h12L6 7z" /></svg>
      </div>
    </div>
  );
}

/* ---------- Rhino bottom ---------- */
const views: [string, number, number][] = [['Top', 62, 36], ['Perspective', 137, 108], ['Front', 79, 50], ['Right', 80, 50]];
const snaps: [string, number, number, boolean][] = [['End', 78, 34, true], ['Near', 87, 45, true], ['Point', 91, 49, true], ['Mid', 78, 37, true], ['Cen', 80, 37, true], ['Int', 67, 24, true], ['Perp', 84, 41, true], ['Tan', 76, 31, true], ['Quad', 94, 52, true], ['Knot', 86, 45, true], ['Vertex', 104, 60, true], ['Project', 124, 65, false], ['Disable', 110, 70, false]];
const status: [string, number, number, number][] = [
  ['CPlane', 83, 8, 66], ['x 106.403', 151, 29, 91], ['y 8.906', 151, 42, 68], ['z 0.000', 151, 42, 67], ['Millimeters', 151, 23, 106],
];
const status2: [string, number, number, number, boolean][] = [
  ['Grid Snap', 111, 9, 94, false], ['Ortho', 75, 10, 55, false], ['Planar', 76, 9, 59, false], ['Osnap', 79, 9, 61, false], ['SmartTrack', 125, 5, 115, true], ['Gumball', 97, 5, 86, true], ['Record History', 158, 10, 139, false], ['Filter', 66, 10, 48, false],
];

function RhinoFooter() {
  return (
    <>
      <div className="flex h-[38px] shrink-0 pl-[109px]">
        {views.map(([t, w, tw]) => (
          <div key={t} className="relative flex h-[37px] items-center justify-end pr-[8px] pt-[3px]" style={{ width: w }}>
            <svg className="absolute inset-0 h-full w-full overflow-visible"><path d={`M0 0V18L14 33Q16 37 20 37H${w - 3}Q${w} 37 ${w} 34V0`} fill={t === 'Top' ? '#e9ebf0' : '#d6d6d6'} stroke="#c8d1e2" /></svg>
            <Label text={t} w={tw} className="relative" />
          </div>
        ))}
        <div className="relative h-[37px] w-[51px]">
          <svg className="absolute inset-0 h-full w-full overflow-visible">
            <path d="M0 0V18L14 33Q16 37 20 37H48Q51 37 51 34V0" fill="#e9ebf0" stroke="#c8d1e2" />
            <path d="M28 12h3v6h6v3h-6v6h-3v-6h-6v-3h6z" fill="#fff" stroke="#999" />
          </svg>
        </div>
      </div>
      <div className="flex h-[43px] shrink-0 pl-[7px] pt-[7px]">
        <div className="h-[33px] w-[2px] bg-[#d9dee8]" />
        <div className="ml-[7px] flex h-[38px] items-center">
          {snaps.map(([t, w, tw, on]) => (
            <div key={t} className="flex shrink-0 items-center" style={{ width: w }}>
              <div className={on ? 'mr-[6px] h-[23px] w-[23px] border-[1.500px] border-[#333] bg-white' : 'mr-[5px] h-[22px] w-[22px] border border-[#c8c8c8] bg-[#dedede]'} />
              <Label text={t} w={tw} className="pt-[2px]" />
            </div>
          ))}
        </div>
      </div>
      <div className="flex h-[28px] shrink-0 border-t border-[#c9d1e0]">
        {status.map(([t, w, pl, tw]) => (
          <div key={t} className="flex items-center border-r border-[#c9d1e0] pt-[5px]" style={{ width: w, paddingLeft: pl }}><Label text={t} w={tw} /></div>
        ))}
        <div className="flex w-[295px] items-center border-r border-[#c9d1e0] pl-[5px] pt-[2px]">
          <div className="mr-[4px] h-[19px] w-[19px] bg-black" />
          <Label text="Default" w={70} className="pt-[3px]" />
        </div>
        {status2.map(([t, w, pl, tw, on]) => (
          <div key={t} className={'flex items-center border-r border-[#c9d1e0] pt-[5px] ' + (on ? 'bg-[#e0f1fb] font-bold' : '')} style={{ width: w, paddingLeft: pl }}><Label text={t} w={tw} /></div>
        ))}
        <div className="flex items-center pl-[2px] pt-[5px]"><Label text="Minutes from last save: 2" w={239} /></div>
      </div>
      <div className="flex h-[14px] shrink-0 overflow-hidden bg-black">
        <div className="ml-[87px] w-[619px] bg-[#f2f2f2]" />
        <div className="ml-[620px] w-[86px] bg-[#333]" />
        <div className="ml-[761px] w-[72px] bg-[#1c1c1c]" />
        <div className="ml-[17px] pt-[7px] leading-[20px] text-white"><Label text="10:23 AM" w={90} /></div>
      </div>
    </>
  );
}

/* ---------- Rhino right strip ---------- */
const rows: [number, string, string, boolean][] = [
  [57, 'bg-[#f5f6fa]', '', false], [41, 'bg-[#f3f4f8]', '', false], [33, 'bg-white', '', false], [70, 'bg-[#e9ebf0]', '', false], [33, 'bg-[#e1e1e1] border-t border-[#b5b5b5]', 'v', false], [43, 'bg-[#f5f6fa]', '', false], [34, 'bg-[#e9ebf0]', '', false],
  [34, 'bg-white', '', false], [34, 'bg-white', '266', false], [34, 'bg-white', '', true], [34, 'bg-white', '269', false], [35, 'bg-[#e9ebf0]', '269', false], [33, 'bg-[#e1e1e1] border border-[#adadad]', 'e...', false], [44, 'bg-[#f5f6fa]', '', false],
  [34, 'bg-white', '266', false], [34, 'bg-white', '', true], [34, 'bg-white', '', false], [33, 'bg-[#e1e1e1] border border-[#adadad]', 'e...', false], [44, 'bg-[#f5f6fa]', '', false], [33, 'bg-[#e1e1e1] border border-[#adadad]', '...', false],
  [35, 'bg-white', '', false], [34, 'bg-white', '', false],
];
const Gear = ({ fill }: { fill: string }) => (
  <svg viewBox="-13 -13 26 26" className="h-[26px] w-[26px]">
    {[0, 45, 90, 135, 180, 225, 270, 315].map((a) => <rect key={a} x="-2.800" y="-12" width="5.600" height="6" rx="1" fill={fill} stroke="#9a9a9a" transform={`rotate(${a})`} />)}
    <circle r="8.300" fill={fill} stroke="#9a9a9a" /><circle r="3.500" fill="#f4f4f4" stroke="#9a9a9a" />
  </svg>
);

function RightStrip() {
  return (
    <div className="absolute right-0 top-[76px] flex h-[1420px] w-[34px] flex-col overflow-hidden bg-[#f5f6fa]">
      <div className="h-[4px] shrink-0 bg-[#e3e6ee]" />
      <div className="flex h-[56px] shrink-0 flex-col items-end justify-around border-b border-[#c9d1e0] bg-[#efeff0] py-[6px] pr-[5px]">
        <svg viewBox="0 0 12 8" className="h-[8px] w-[12px]"><path d="M1 7l5-5 5 5" fill="none" stroke="#555" strokeWidth="2.500" /></svg>
        <svg viewBox="0 0 12 8" className="h-[8px] w-[12px]"><path d="M1 1l5 5 5-5" fill="none" stroke="#555" strokeWidth="2.500" /></svg>
      </div>
      <div className="flex h-[36px] shrink-0 flex-col items-end gap-[1px] border-b border-[#d5dce8] bg-[#e9ebf0] pt-[1px]">
        {['M0 6L4.500 0 9 6z', 'M0 0h9L4.500 6z'].map((d) => (
          <div key={d} className="flex h-[15px] w-[22px] items-center justify-center border border-[#adadad] bg-[#f0f0f0]"><svg viewBox="0 0 9 6" className="h-[6px] w-[9px]"><path d={d} /></svg></div>
        ))}
      </div>
      <div className="flex h-[38px] shrink-0 items-center bg-[#e9ebf0] pl-[11px]"><div className="shrink-0"><Gear fill="#f4f4f4" /></div></div>
      <div className="h-[67px] shrink-0 border-y border-[#cfd8e8] bg-[#e9ebf0]" />
      <div className="h-[8px] shrink-0 bg-[#e9ebf0]" />
      {[0, 1, 2].map((i) => (
        <div key={i} className="relative h-[39.500px] shrink-0 border-b border-[#cfd8e8] bg-[#e9ebf0]">
          <svg viewBox="0 0 34 39" className="absolute inset-0"><path d="M0 0l34 40H0z" fill="#d4d4d6" stroke="#c5d0e2" /></svg>
          {i > 0 && <span className="absolute left-[2px] top-[9px] leading-[20px]">..</span>}
        </div>
      ))}
      <div className="relative flex h-[33px] shrink-0 items-center bg-[#e9ebf0] pl-[11px]">
        <svg viewBox="0 0 34 29" className="absolute inset-0"><path d="M0 2l26 22H0z" fill="#d4d4d6" /></svg>
        <div className="relative shrink-0"><Gear fill="#b5b7ba" /></div>
      </div>
      {rows.map(([h, c, t, blue], i) => (
        <div key={i} className={'mr-[4px] flex shrink-0 items-center justify-end overflow-hidden border-b border-b-[#f0f1f5] ' + c} style={{ height: h }}>
          {t === 'v' ? <svg viewBox="0 0 12 8" className="mr-[10px] h-[8px] w-[12px]"><path d="M1 1l5 5 5-5" fill="none" stroke="#555" strokeWidth="1.300" /></svg> : t && <span className={t.includes('.') ? 'mr-[7px] text-[18px]' : 'mr-[1px] text-[18px]'}>{t}</span>}
          {blue && <div className="ml-[1px] mr-auto h-[17px] w-[1.500px] bg-[#4a7ab5]" />}
        </div>
      ))}
    </div>
  );
}

/* ---------- Grasshopper ribbon ---------- */
const ghMenus: [string, number, number][] = [['File', 33, 24], ['Edit', 36, 24], ['View', 46, 24], ['Display', 69, 23], ['Solution', 80, 24], ['Help', 45, 0]];
const ghTabs: [string, number, number][] = [['Maths', 52, 29], ['Sets', 38, 29], ['Vector', 56, 29], ['Curve', 51, 29], ['Surface', 66, 29], ['Mesh', 47, 29], ['Intersect', 75, 28], ['Transform', 87, 30], ['Display', 63, 29], ['Kangaroo2', 94, 0]];

const Hx = ({ children }: { children: React.ReactNode }) => (
  <svg viewBox="0 0 44 40" className="h-[40px] w-[44px]">
    <path d="M11 1h22l10 19-10 19H11L1 20z" fill="url(#hx)" stroke="#111" strokeWidth="1.600" strokeLinejoin="round" />
    <path d="M12 3.500h20L40.500 20" fill="none" stroke="#666" strokeWidth=".8" />
    <g fill="none" stroke="#fff" strokeWidth="2.600">{children}</g>
  </svg>
);
const Bt = ({ f = 'url(#btn)', children }: { f?: string; children: React.ReactNode }) => (
  <svg viewBox="0 0 44 44" className="h-[43px] w-[43px]"><rect x="1.200" y="1.200" width="41.600" height="41.600" rx="4" fill={f} stroke="#222" strokeWidth="2" />{children}</svg>
);
const Pair = ({ a, b }: { a: React.ReactNode; b: React.ReactNode }) => (
  <div className="flex h-[102px] w-[50.500px] flex-col justify-between">
    <div className="flex h-[51px] items-center justify-center">{a}</div>
    <div className="flex h-[51px] items-center justify-center">{b}</div>
  </div>
);
const Sep = () => <div className="mx-[8px] mt-[8px] h-[88px] w-px bg-[#b5b5b5]" />;

function Panel({ name, w, tw, children }: { name: string; w: number; tw: number; children: React.ReactNode }) {
  return (
    <div className="h-[131px] shrink-0 overflow-hidden rounded-[7px] border border-[#8f8f8f] bg-gradient-to-b from-[#d2d2d2] to-[#ececec]" style={{ width: w }}>
      <div className="flex h-[104px] pl-[1.500px]">{children}</div>
      <div className="relative flex h-[26px] items-center justify-center bg-gradient-to-b from-[#333] to-[#161616] font-['Liberation_Sans',sans-serif] text-[17px] text-white">
        <Label text={name} w={tw} className="-ml-[20px] -mt-[3px]" />
        <svg viewBox="0 0 12 14" className="absolute bottom-[5px] right-[5px] h-[13px] w-[12px]"><path d="M4.800 0h2.400v6H12L6 13 0 6h4.800z" fill="#8a8a8a" /></svg>
      </div>
    </div>
  );
}

function Ribbon() {
  return (
    <div className="flex h-[156px] gap-[8px] rounded-tr-[14px] border-t border-[#a8a8a8] bg-gradient-to-b from-[#d3d3d3] via-[#e6e6e6] to-[#f2f2f2] pl-[5px] pt-[3px]">
      <Panel name="Geometry" w={346} tw={80}>
        <Pair a={<Hx><path d="M17 15l10 10M27 15L17 25" strokeWidth="4.500" /></Hx>} b={<Hx><path d="M14 28l12-12" strokeWidth="5" /><path d="M20 11h11v11z" fill="#fff" stroke="none" /></Hx>} />
        <Sep />
        <Pair a={<Hx><ellipse cx="22" cy="20" rx="12" ry="10" strokeWidth="3.400" /></Hx>} b={<Hx><path d="M14 11c8 4 12 11 13 20" strokeWidth="3" /><path d="M20 31h12M11 15l6-7" /></Hx>} />
        <Pair a={<Hx><ellipse cx="22" cy="20" rx="14" ry="8.500" transform="rotate(-40 22 20)" strokeWidth="1.400" stroke="#aaa" /><ellipse cx="20" cy="19" rx="8" ry="4" transform="rotate(-45 20 19)" strokeWidth="1.800" /><path d="M12 30c8 2 21-9 22-21" strokeWidth="3" /></Hx>} b={<Hx><path d="M15 27l12-13" /><path d="M11 25.500h6v6h-6zM26 9.500h6v6h-6z" fill="#222" strokeWidth="2" /></Hx>} />
        <Pair a={<Hx><path d="M9 14l21-6 5 13-23 10z" fill="#bbb" strokeWidth="2" /><path d="M14 18l13-4 4 6-15 6z" stroke="#777" strokeWidth="1.400" /></Hx>} b={<Hx><path d="M8 12l20 20M16 8l20 20M8 28L28 8M16 32l20-20" stroke="#888" strokeWidth="1.500" /><path d="M22 11l9 9-9 9-9-9z" /></Hx>} />
        <Sep />
        <Pair a={<Hx><path d="M12 12l10-4 10 4-9 4z" fill="#eee" stroke="#fff" strokeWidth="1" /><path d="M12 12l11 4v15l-11-5z" fill="#bbb" strokeWidth="1" /><path d="M23 16l9-4v14l-9 5z" fill="#888" strokeWidth="1" /></Hx>} b={<Hx><path d="M11 23l12-12c7-2 11 3 11 9l-9 12c-8 1-14-3-14-9z" fill="#ccc" strokeWidth="1.200" /><ellipse cx="27" cy="15" rx="6" ry="4.500" transform="rotate(40 27 15)" fill="#666" strokeWidth="1.200" /></Hx>} />
        <Pair a={<Hx><path d="M15 8v24M22 8v24M29 8v24M10 13h24M9 20h26M10 27h24M12 10l20 20M32 10L12 30" strokeWidth="1.100" stroke="#ddd" /></Hx>} b={<Hx><path d="M18 9l13-3v26l-20-4c6-5 7-11 7-19z" fill="#999" strokeWidth="1.600" /><path d="M24 8c0 8-1 16-4 22M16 20h15" strokeWidth="1" /></Hx>} />
      </Panel>
      <Panel name="Primitive" w={107} tw={71}>
        <Pair a={<Hx><circle cx="22" cy="20" r="11" fill="#fff" stroke="none" /><path d="M29 13A10 10 0 0 1 15 28z" fill="#222" stroke="none" /></Hx>} b={<Hx><text x="22" y="30" textAnchor="middle" fontSize="29" fill="#fff" stroke="none" fontWeight="bold" fontFamily="Liberation Serif, serif">7</text></Hx>} />
        <Pair a={<Hx><text x="22" y="29" textAnchor="middle" fontSize="26" fill="#fff" stroke="none" fontWeight="bold" fontFamily="Liberation Serif, serif" textLength="30" lengthAdjust="spacingAndGlyphs">0.1</text></Hx>} b={<Hx><text x="22" y="30" textAnchor="middle" fontSize="29" fill="#fff" stroke="none" fontWeight="bold" fontFamily="Liberation Serif, serif">A</text></Hx>} />
      </Panel>
      <Panel name="Input" w={244} tw={41}>
        <Pair a={<Bt><path d="M20 11h5v9h5l-7.500 8-7.500-8h5z" /><path d="M6 33h33M8 33v6M12 33v4M16 33v6M20 33v4M24 33v6M28 33v4M32 33v6M36 33v4" stroke="#111" strokeWidth="1.600" /></Bt>} b={<Bt f="url(#yel)"><path d="M6 35c2-8 4-12 5-11 2 1-2 11 0 11s5-16 8-16c2 0-3 13 0 13 3-1 6-18 9-18 2 1-3 15 1 15 4-1 4-13 7-20" fill="none" stroke="#b36200" strokeWidth="3.500" strokeLinecap="round" /></Bt>} />
        <Sep />
        <Pair a={<Bt><rect x="13" y="6" width="18" height="32" fill="#1c1c1c" stroke="#444" /><rect x="15" y="8" width="14" height="13" fill="#ccc" /></Bt>} b={<svg viewBox="0 0 44 44" className="h-[44px] w-[44px]"><circle cx="22" cy="22" r="20" fill="#999" stroke="#555" strokeWidth="2" /><circle cx="21" cy="22" r="15" fill="#222" stroke="#555" strokeWidth="2" /><path d="M34 16l8 6-8 6z" fill="#222" /></svg>} />
        <Pair a={<Bt f="url(#btnd)"><g fill="none" stroke="#333" strokeWidth="4"><path d="M20 3l-6 8h17M26 6v8" stroke="#777" /><path d="M32 20H20l-5 7c9-2 14 2 10 15" /></g></Bt>} b={<Bt f="#666"><g fill="#ddd" stroke="#222" strokeWidth="1.800"><rect x="6" y="8" width="32" height="7" /><rect x="6" y="19" width="32" height="7" /><rect x="6" y="30" width="32" height="7" /></g></Bt>} />
        <Sep />
        <Pair a={<Bt f="url(#pink)"><rect x="3" y="3" width="38" height="12" fill="#c9a0b5" opacity=".6" /><path d="M2 29h40" stroke="#222" strokeWidth="1.800" /><circle cx="4" cy="29" r="3.500" fill="#fff" stroke="#111" strokeWidth="1.600" /><circle cx="30" cy="29" r="3.500" fill="#fff" stroke="#111" strokeWidth="2" /></Bt>} b={<Bt f="#6c2"><g>{['#dcf5b4', '#c8f07a', '#a6e86a', '#d4f59a', '#2fae12', '#a4e800', '#3fc01c', '#7fb800', '#44e028', '#0a7a08', '#96f52a', '#34c878', '#1db81a', '#053a05', '#0a8a10', '#5cf0c0'].map((c, i) => <rect key={i} x={3 + (i % 4) * 9.5} y={3 + Math.floor(i / 4) * 9.5} width="9.700" height="9.700" fill={c} />)}</g></Bt>} />
      </Panel>
      <Panel name="Util" w={194} tw={26}>
        <Pair
          a={<svg viewBox="0 0 40 42" className="h-[42px] w-[40px]"><path d="M10 28L24 4l9 27" fill="none" stroke="#7a1f1f" strokeWidth="2" /><path d="M7 14C8 4 16 0 24 2c-2 9-8 14-17 12z" fill="#4aa81c" stroke="#25660a" /><circle cx="10" cy="29" r="8" fill="url(#red)" /><circle cx="29" cy="33" r="8" fill="url(#red)" /></svg>}
          b={<Bt><path d="M3 38h38v4H3z" fill="#000" /><path d="M19 40c2-6 2-10 1-14M25 40c-2-8-1-12-1-16M21 27L9 18M22 26L15 9M23 24l3-17M23 26l12-12M20 26l-11 0M24 27l12-3M14 20l-7-8M30 18l8 0M18 15l-9-8M26 14l6-8" stroke="#111" strokeWidth="2" fill="none" /><g fill="#222" opacity=".55"><circle cx="12" cy="13" r="5" /><circle cx="22" cy="8" r="5" /><circle cx="32" cy="13" r="5" /><circle cx="9" cy="23" r="3.500" /><circle cx="36" cy="22" r="3.500" /></g></Bt>}
        />
        <Sep />
        <Pair a={<svg viewBox="0 0 40 32" className="h-[32px] w-[40px]"><path d="M2 8h16V2l19 14-19 14v-6H2z" fill="#444" stroke="#222" strokeWidth="2" /></svg>} b={<svg viewBox="0 0 40 32" className="h-[32px] w-[40px]"><path d="M2 8h16V2l19 14-19 14v-6H2z" fill="#e8e8e8" stroke="#777" strokeWidth="2" /></svg>} />
        <Sep />
        <Pair
          a={<svg viewBox="0 0 40 40" className="h-[40px] w-[40px]"><ellipse cx="15" cy="14" rx="10" ry="14" transform="rotate(30 15 14)" fill={W} stroke="#777" strokeWidth="1.500" /><circle cx="15" cy="17" r="4" fill="#555" /><ellipse cx="26" cy="24" rx="10" ry="13" transform="rotate(30 26 24)" fill="url(#mag)" stroke="#7a1040" strokeWidth="1.500" /><circle cx="24" cy="25" r="4.500" fill="#7a1040" /></svg>}
          b={<svg viewBox="0 0 40 40" className="h-[40px] w-[40px]"><path d="M16 3h8l1 14 9 19q-14 5-28 0l9-19z" fill="#f4e4ec" stroke="#8a1a4c" strokeWidth="1.800" /><path d="M13 20h14l7 15q-14 5-28 0z" fill="url(#mag)" /></svg>}
        />
      </Panel>
    </div>
  );
}

/* ---------- Grasshopper canvas toolbar ---------- */
const Caret = () => <svg viewBox="0 0 9 5" className="h-[5px] w-[8px]"><path d="M0 0h9L4.500 5z" /></svg>;
const Can = ({ f, s, wire }: { f: string; s: string; wire?: boolean }) => (
  <g stroke={s} strokeWidth="1.600">
    <path d="M2 23L17 4C25-1 40 8 38 18L24 36C14 41 0 33 2 23z" fill={f} />
    <ellipse cx="28" cy="12.500" rx="11" ry="8.500" transform="rotate(50 28 12.500)" fill={wire ? 'none' : s} fillOpacity=".25" />
    <ellipse cx="28" cy="12.500" rx="6.500" ry="4.500" transform="rotate(50 28 12.500)" fill={wire ? 'none' : s} fillOpacity=".6" />
    {wire && <ellipse cx="13" cy="27.500" rx="10" ry="8" transform="rotate(50 13 27.500)" fill="none" />}
    {wire && <ellipse cx="13" cy="27.500" rx="6" ry="4.500" transform="rotate(50 13 27.500)" fill="none" />}
  </g>
);
function CanvasBar() {
  return (
    <div className="flex h-[51px] items-center border-t-2 border-[#8c8c8c] bg-gradient-to-b from-white to-[#f4f4f4] pb-px pl-[4px]">
      <svg viewBox="0 0 36 40" className="h-[40px] w-[36px]"><path d="M5 2h10l3 4h12v20H5z" fill="#eee" stroke="#666" strokeWidth="1.500" /><path d="M2 17h10l4-4h18v25H2z" fill="url(#grn)" stroke="#2f6a12" strokeWidth="1.500" /></svg>
      <svg viewBox="0 0 40 40" className="ml-[10px] h-[40px] w-[40px]"><path d="M1 1h38v38H6l-5-5z" fill="#0f6cf0" stroke="#0a3a96" strokeWidth="1.600" /><rect x="7" y="2" width="26" height="17" fill="#ddd" /><path d="M10 7h20M10 12h20" stroke="#aaa" strokeWidth="1.500" /><rect x="8" y="24" width="22" height="14" fill="#999" stroke="#123" /><rect x="11" y="26" width="8" height="10" fill="#0f50d0" /></svg>
      <div className="ml-[9px] h-[38px] w-px bg-[#d0d0d0]" />
      <div className="ml-[4px] flex h-[36px] w-[241px] items-center justify-between border border-[#767676] bg-white pl-[3px] pr-[7px]">
        <Label text="123%" w={51} />
        <svg viewBox="0 0 14 9" className="h-[9px] w-[14px]"><path d="M1 1l6 6 6-6" fill="none" stroke="#444" strokeWidth="1.400" /></svg>
      </div>
      <svg viewBox="0 0 40 40" className="ml-[6px] h-[40px] w-[40px]"><path d="M3 14V3h12M25 3h12v11M37 26v11H25M15 37H3V26" fill="none" stroke="#1d1d1d" strokeWidth="5.500" /><path d="M16 16l8 8M24 16l-8 8" stroke="#222" strokeWidth="3" /></svg>
      <div className="ml-[11px]"><Caret /></div>
      <svg viewBox="0 0 40 28" className="ml-[10px] h-[28px] w-[40px]"><path d="M1 14C10 0 30 0 39 14 30 27 10 27 1 14z" fill="#f4f4f4" stroke="#333" strokeWidth="2" /><circle cx="20" cy="13" r="10" fill="url(#sky)" stroke="#1a5a8a" strokeWidth="1.500" /><circle cx="20" cy="13" r="4.500" fill="#08203a" /></svg>
      <div className="ml-[11px]"><Caret /></div>
      <svg viewBox="0 0 40 40" className="ml-[8px] h-[40px] w-[40px]"><path d="M3 17c8-3 9 2 5 9-4 9 1 15 11 9" fill="none" stroke="#5a1010" strokeWidth="2" /><path d="M17 24L34 2c5 5 6 14 4 18L26 33z" fill="#e8281e" stroke="#8a0c08" /><path d="M22 21L35 5l3 6-12 17z" fill="#ff7a70" stroke="none" /><path d="M17 24l9 8-11 6z" fill="#e0b060" stroke="#553" /><path d="M15.500 33l3 3-4 2z" /></svg>
      <div className="ml-auto flex items-center">
        <svg viewBox="0 0 34 42" className="h-[40px] w-[34px]"><path d="M4 19L13 4c8-5 19 1 18 10l-7 13H7c-3-2-4-5-3-8z" fill={W} stroke="#888" /><ellipse cx="22" cy="11" rx="8" ry="6.500" transform="rotate(45 22 11)" fill="#d4d4d4" stroke="#888" /><path d="M2 30c8-11 22-11 30 0-7 8-23 8-30 0z" fill="#222" /><path d="M2 33c4 5 8 7 15 7s11-2 15-7" fill="none" stroke="#444" strokeWidth="4" /><path d="M3 34c4 4 8 5.500 14 5.500S27 38 31 34" fill="none" stroke="#ddd" strokeWidth="2" /></svg>
        <svg viewBox="0 0 40 40" className="ml-[10px] h-[40px] w-[40px]"><Can f="none" s="#555" wire /></svg>
        <div className="ml-[5px] flex h-[46px] w-[47px] items-center justify-center border-[1.500px] border-[#3f8ad4] bg-[#eaf3fb]"><svg viewBox="0 0 40 40" className="h-[40px] w-[40px] shrink-0"><Can f="url(#redcan)" s="#5a0400" /></svg></div>
        <div className="ml-[7px] h-[40px] w-px bg-[#d0d0d0]" />
        <svg viewBox="0 0 40 40" className="ml-[9px] h-[40px] w-[40px]"><Can f="url(#grn)" s="#2a6208" /><path d="M5 10l27 26c-2 3-6 4-9 3C12 40 1 34 2 23z" fill={W} stroke="#888" /><path d="M4 8l29 30" stroke="#333" strokeWidth="2" /></svg>
        <svg viewBox="0 0 38 40" className="ml-[9px] h-[38px] w-[36px]"><ellipse cx="19" cy="19" rx="18" ry="18.500" fill={W} stroke="#555" strokeWidth="1.400" /><path d="M19 1a18 18.500 0 0 0 0 37z" fill="url(#orange)" stroke="#7a3a08" /></svg>
        <div className="ml-[8px] h-[40px] w-px bg-[#d0d0d0]" />
        <svg viewBox="0 0 34 34" className="ml-[7px] h-[34px] w-[34px]"><path d="M17 1l12 6 4 12-8 11-9 3-12-6-3-13L6 5z" fill="url(#sky)" stroke="#1c3f9a" strokeWidth="2" /></svg>
        <div className="ml-[9px] mr-[8px]"><Caret /></div>
      </div>
    </div>
  );
}

/* ---------- Grasshopper canvas ---------- */
const CX = 1198, CY = 384;

const wires: [number, number, number, number, number][] = [
  [1418, 417.5, 1727, 417.5, 150], [1418, 417.5, 1660, 1154.5, 540], [1436, 483.8, 1727, 439.5, 145], [1410, 616.3, 1610, 616.3, 90], [1414, 678.5, 1610, 638, 98], [1414, 678.5, 1660, 1176.7, 364],
  [1688, 605, 1744, 786.5, 125], [1460, 795.3, 1567, 1005.3, 150], [1351, 932, 1567, 1027.5, 108], [1645, 1016.4, 1762, 953.3, 60], [1738, 1165.5, 1762, 975.5, 129], [1839, 959, 1744, 811.8, 96],
  [1824, 786.5, 2011, 992, 143], [2017, 1208.5, 2011, 1036.3, 120], [1807, 406, 2313, 998.3, 425], [1465, 1344.7, 1603, 1383, 69], [1443, 1424, 1603, 1405, 80],
];
type S = { t: string; x: number; r: number; y: number; lb: number; tw: number; t0: number; t1: number; n: number; d: number; v: string; vx: number };
const sliders: S[] = [
  { t: 'Radius', x: 1231.4, r: 1414.3, y: 417.5, lb: 1281.6, tw: 36, t0: 1292, t1: 1403, n: 10, d: 1353, v: '11', vx: 1337.7 },
  { t: 'Segments', x: 1231.4, r: 1432, y: 483.8, lb: 1299, tw: 53, t0: 1310, t1: 1421, n: 6, d: 1421, v: '6', vx: 1408 },
  { t: 'X Size', x: 1227, r: 1406.5, y: 616.3, lb: 1274, tw: 31, t0: 1284.5, t1: 1395.5, n: 10, d: 1299, v: '2', vx: 1310.6 },
  { t: 'Y Size', x: 1230, r: 1410, y: 678.5, lb: 1276, tw: 31, t0: 1287, t1: 1399, n: 10, d: 1309.4, v: '3', vx: 1321 },
  { t: 'A', x: 1237, r: 1456, y: 795.3, lb: 1259.6, tw: 7, t0: 1270, t1: 1445, n: 10, d: 1294, v: '2', vx: 1305 },
  { t: 'Count', x: 1834, r: 2013.5, y: 1208.5, lb: 1880.7, tw: 32, t0: 1891.3, t1: 2001.7, n: 10, d: 1957.7, v: '6', vx: 1945.3 },
  { t: 'X Size', x: 1282, r: 1462, y: 1344.7, lb: 1329, tw: 31, t0: 1340, t1: 1451, n: 10, d: 1354.7, v: '2', vx: 1366 },
  { t: 'Y Size', x: 1260, r: 1440, y: 1424, lb: 1306, tw: 31, t0: 1316, t1: 1429, n: 10, d: 1339.4, v: '3', vx: 1350.7 },
];
type N = { t: string; x: number; r: number; y: number; b: number; c0: number; c1: number; tl: number; ins: [string, number][]; outs: [string, number][]; sel?: boolean };
const nodes: N[] = [
  { t: 'Polygon', x: 1729.8, r: 1804, y: 381, b: 475.3, c0: 1754.3, c1: 1781.2, tl: 57, ins: [['P', 395], ['R', 417], ['S', 439.5], ['Rf', 461.5]], outs: [['P', 406], ['L', 450.5]] },
  { t: 'Rectangle', x: 1612.6, r: 1685.3, y: 580.7, b: 674.3, c0: 1634, c1: 1660.4, tl: 69, ins: [['P', 594], ['X', 616.3], ['Y', 638], ['R', 660.5]], outs: [['R', 605], ['L', 649.7]] },
  { t: 'Move', x: 1747, r: 1821, y: 772, b: 828, c0: 1768.6, c1: 1795.5, tl: 39, ins: [['G', 786.5], ['T', 812]], outs: [['G', 786.5], ['X', 812]] },
  { t: 'Vec', x: 1764.3, r: 1836.3, y: 940, b: 1011, c0: 1785, c1: 1812.3, tl: 24, ins: [['X', 953.5], ['Y', 975.5], ['Z', 997.5]], outs: [['V', 959], ['L', 992]], sel: true },
  { t: 'A×B', x: 1569.7, r: 1641.7, y: 992.3, b: 1041, c0: 1591, c1: 1617.7, tl: 31, ins: [['A', 1005.3], ['B', 1027.5]], outs: [['R', 1016.4]] },
  { t: 'A-B', x: 1662.7, r: 1734.7, y: 1141.3, b: 1190, c0: 1683.3, c1: 1710.7, tl: 26, ins: [['A', 1154.5], ['B', 1176.7]], outs: [['R', 1165.5]] },
  { t: 'ArrPolar', x: 2013.3, r: 2087.3, y: 978.7, b: 1071.7, c0: 2034.7, c1: 2061.7, tl: 60, ins: [['G', 992], ['P', 1014.3], ['N', 1036.3], ['A', 1058.5]], outs: [['G', 1003], ['X', 1047]] },
  { t: 'RDiff', x: 2315.3, r: 2388, y: 985.7, b: 1055.7, c0: 2336.7, c1: 2364, tl: 38, ins: [['A', 998.3], ['B', 1020.8], ['P', 1042.5]], outs: [['R', 1020.8]] },
  { t: 'Rectangle', x: 1605, r: 1677.7, y: 1347, b: 1441, c0: 1626.8, c1: 1653.5, tl: 69, ins: [['P', 1361], ['X', 1383], ['Y', 1405], ['R', 1427]], outs: [['R', 1372], ['L', 1416]] },
];
const Grip = ({ left, y }: { left?: boolean; y: number }) => (
  <div className={'absolute h-[10px] w-[5.500px] border-2 border-black bg-white ' + (left ? '-left-[6px] rounded-l-full border-r-0' : '-right-[6px] rounded-r-full border-l-0')} style={{ top: y - 5 }} />
);

function Slider({ s }: { s: S }) {
  const ticks = Array.from({ length: s.n + 1 }, (_, i) => s.t0 - s.lb + ((s.t1 - s.t0) * i) / s.n);
  return (
    <div className="absolute h-[23px] rounded-[3px] border border-[#777] bg-gradient-to-b from-[#f0f0f0] to-[#c9c9c9] shadow-[0_0_2px_#0006]" style={{ left: s.x - CX, top: s.y - 11.5 - CY, width: s.r - s.x }}>
      <Grip y={10.5} />
      <div className="flex h-full">
        <div className="flex h-full shrink-0 items-center justify-center rounded-l-[2px] border-r border-[#666] bg-gradient-to-b from-[#adabbd] to-[#8c8a9c]" style={{ width: s.lb - s.x }}>
          <Label text={s.t} w={s.tw} />
        </div>
        <div className="relative h-full flex-1">
          <svg className="absolute -left-[1px] top-0 h-[21px] w-full overflow-visible" fill="none">
            {ticks.map((x, i) => <path key={i} d={`M${x} ${i === 0 || i === s.n || i === s.n / 2 ? 5 : 7}V11`} stroke="#bbb" strokeWidth=".8" />)}
            <path d={`M${ticks[0]} 10.500H${ticks[s.n]}`} stroke="#ccc" strokeWidth=".8" />
            <path d={`M${s.d - s.lb} 7l3.500 3.500-3.500 3.500-3.500-3.500z`} fill="#fff" stroke="#111" strokeWidth="1.500" />
          </svg>
          <span className="absolute top-[2px] -translate-x-1/2 bg-[#dedede] px-[1px] leading-[16px] text-[#222]" style={{ left: s.vx - s.lb }}>{s.v}</span>
        </div>
      </div>
    </div>
  );
}

function Node({ n }: { n: N }) {
  return (
    <div className={'absolute rounded-[4px] border border-[#666] shadow-[0_0_3px_#0008] bg-gradient-to-b ' + (n.sel ? 'from-[#aeacbe] to-[#8b899b]' : 'from-[#ececec] to-[#c4c4c4]')} style={{ left: n.x - CX, top: n.y - CY, width: n.r - n.x, height: n.b - n.y }}>
      {n.ins.map(([t, y]) => (
        <React.Fragment key={t}>
          <Grip left y={y - n.y - 1} />
          <span className="absolute w-[12px] -translate-y-1/2 whitespace-nowrap text-center leading-[14px]" style={{ top: y - n.y - 1, left: n.c0 - n.x - (t === 'Rf' ? 17 : 16) }}>{t}</span>
        </React.Fragment>
      ))}
      {n.outs.map(([t, y]) => (
        <React.Fragment key={t}>
          <Grip y={y - n.y - 1} />
          <span className="absolute w-[12px] -translate-y-1/2 text-center leading-[14px]" style={{ top: y - n.y - 1, left: n.c1 - n.x + 1.5 }}>{t}</span>
        </React.Fragment>
      ))}
      <div className="absolute inset-y-[1.500px] flex items-center justify-center rounded-[4px] border border-black bg-gradient-to-b from-[#585858] to-[#2c2c2c] shadow-[inset_0_0_0_1px_#6a6a6a]" style={{ left: n.c0 - n.x - 1, width: n.c1 - n.c0 }}>
        <div className="-ml-[2px] shrink-0 -rotate-90 text-[15px] font-bold leading-[20px] text-white"><Label text={n.t} w={n.tl} /></div>
      </div>
    </div>
  );
}

function Canvas() {
  const bez = ([a, b, c, d, k]: number[]) => `M${a} ${b}C${a + k} ${b} ${c - k} ${d} ${c} ${d}`;
  return (
    <div className="relative h-[1059px] overflow-hidden bg-[#d4d0c8] text-[11.500px] text-[#222]">
      <svg viewBox="1198 384 1223 1059" className="block h-[1059px] w-[1223px]" fill="none">
        {Array.from({ length: 7 }, (_, i) => <path key={'v' + i} d={`M${1366.3 + i * 165.8} 384v1060`} stroke="#bab7b0" strokeWidth="1.300" />)}
        {Array.from({ length: 19 }, (_, i) => <path key={'h' + i} d={`M1198 ${427.3 + i * 55.24}h1224`} stroke="#c2beb7" strokeWidth="1.400" />)}
        <g stroke="#000" strokeOpacity=".6" strokeWidth="3.200">{wires.map((w, i) => <path key={i} d={bez(w)} />)}</g>
        <path d={bez([2090, 1003.3, 2313, 1020.8, 111])} stroke="#5a5954" strokeWidth="5.500" />
        <path d={bez([2090, 1003.3, 2313, 1020.8, 111])} stroke="#aaa7a0" strokeWidth="1.600" />
        <g fill="#000"><path d="M2212 1175l14 3-1 8 3 4-6 6c-6 8-6 16-2 26l-4 4c-5-8-5-26 1-34l3-8z" /><ellipse cx="2236" cy="1182" rx="6" ry="5" /><ellipse cx="2269" cy="1182" rx="6" ry="5" /></g>
        <circle cx="2253.700" cy="1215" r="35.500" fill="url(#disc)" stroke="#222" strokeWidth="2" />
        <circle cx="2253.700" cy="1215" r="33" stroke="#fff" strokeWidth="2.600" />
        <path d="M2226 1193l10 4-8 4zM2281 1193l-10 4 8 4zM2226 1238l10-4-8-4zM2281 1238l-10-4 8-4z" fill="#fff" stroke="#fff" />
      </svg>
      {sliders.map((s, i) => <Slider key={i} s={s} />)}
      <div className="absolute left-[93px] top-[537px] flex h-[22px] w-[55px] items-center justify-center rounded-[3px] border border-[#666] bg-gradient-to-b from-[#adabbd] to-[#8c8a9c] shadow-[0_0_2px_#0006]">
        <Grip left y={10} /><Grip y={10} /><Label text="Num" w={25} />
      </div>
      {nodes.map((n, i) => <Node key={i} n={n} />)}
      <div className="absolute left-0 top-0 h-[1010px] w-[2px] bg-[#555]" />
      <div className="absolute bottom-0 left-0 h-[50px] w-[11px] border border-[#444] bg-gradient-to-b from-[#ccc] via-[#777] to-[#777]" />
    </div>
  );
}

function Grasshopper() {
  return (
    <div className="absolute left-[1195px] top-[39px] flex h-[1442px] w-[1230px] flex-col border border-[#8a8a8a] bg-[#f0f0f0] shadow-[0_5px_16px_rgba(0,0,0,0.35)]">
      <div className="flex h-[51px] shrink-0 items-center bg-white pl-[12px] pt-px">
        <Label text="Grasshopper - hexagrass" w={235} className="text-[#999]" />
        <div className="ml-auto flex items-center pr-[34px]">
          <div className="mr-[64px] h-[1.500px] w-[18px] bg-[#8a8a8a]" />
          <div className="mr-[65px] h-[19px] w-[18px] border-[1.500px] border-[#8a8a8a]" />
          <WinX />
        </div>
      </div>
      <div className="flex h-[46px] shrink-0 items-center bg-gradient-to-r from-[#efefef] to-[#fcfcfc] pl-[18px] pt-[4px]">
        {ghMenus.map(([t, w, g]) => <div key={t} style={{ marginRight: g }}><Label text={t} w={w - 0.3} /></div>)}
        <Label text="hexagrass" w={92} className="ml-auto mr-[15px]" />
      </div>
      <div className="relative z-10 -mb-[2px] flex h-[42px] shrink-0 items-center pl-[2px] font-['Liberation_Sans',sans-serif] text-[17.500px] text-[#6e6e6e]">
        <div className="mr-[14px] flex h-[42px] w-[94px] items-center justify-center self-start rounded-t-[12px] border border-b-0 border-[#a8a8a8] bg-gradient-to-b from-white via-white to-[#d6d6d6] text-black">
          <Label text="Params" w={65} className="-ml-[4px] -mt-[2px]" />
        </div>
        {ghTabs.map(([t, w, g]) => <div key={t} style={{ marginRight: g }}><Label text={t} w={w} /></div>)}
      </div>
      <Ribbon />
      <div className="mx-[2px] flex shrink-0 flex-col"><CanvasBar /><Canvas /></div>
      <div className="mt-[2px] flex flex-1 items-center border-t border-[#d8d8d8] pl-[11px] pr-[60px] pt-[2px]">
        <Label text="..." w={15} className="pt-px" />
        <Label text="1.0.0007" w={77} className="ml-auto text-[#808080]" />
      </div>
    </div>
  );
}

export default function App() {
  return (
    <div className="relative flex h-[1585px] w-[2456px] flex-col overflow-hidden bg-[#e9ebf0] font-['Noto_Sans',sans-serif] text-[19px] leading-[28px] text-[#111]">
      <Defs />
      <RhinoHeader />
      <div className="flex h-[1192px] shrink-0">
        <SideBar />
        <Viewport />
      </div>
      <RhinoFooter />
      <div className="absolute left-[2288px] top-[1470px] h-[27px] w-[168px] border-b-2 border-l border-[#bfc8dc] bg-[#f5f6fa]" />
      <RightStrip />
      <Grasshopper />
    </div>
  );
}
